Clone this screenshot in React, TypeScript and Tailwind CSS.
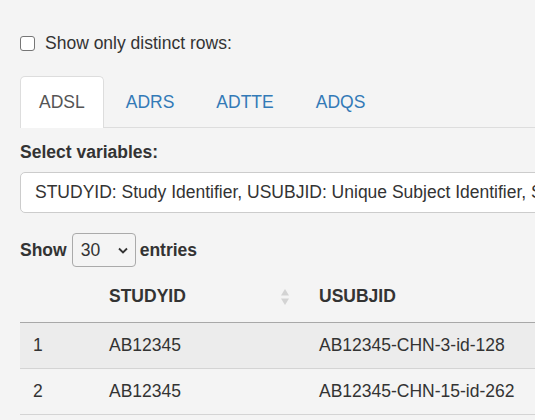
import React from "react";

const rows = [
  { n: 1, studyid: "AB12345", usubjid: "AB12345-CHN-3-id-128" },
  { n: 2, studyid: "AB12345", usubjid: "AB12345-CHN-15-id-262" },
];

const tabs = ["ADSL", "ADRS", "ADTTE", "ADQS"];

function SortIcon() {
  return (
    <svg width="10" height="18" viewBox="0 0 10 18" className="shrink-0">
      <path d="M5 1 L9 7.5 L1 7.5 Z" fill="#d3d3d3" />
      <path d="M5 17 L9 10.5 L1 10.5 Z" fill="#d3d3d3" />
    </svg>
  );
}

export default function App() {
  return (
    <div
      className="min-h-screen w-full overflow-hidden bg-[#f4f4f4] pl-[20px] text-[17.5px] leading-[25px] text-[#333]"
      style={{ fontFamily: '"Liberation Sans", Arial, sans-serif' }}
    >
      {/* distinct rows checkbox */}
      <label className="mt-[31px] flex h-[24px] items-center">
        <span className="inline-block h-[15px] w-[15px] rounded-[3px] border border-[#767676] bg-white" />
        <span className="ml-[10px]">Show only distinct rows:</span>
      </label>

      {/* tabs */}
      <div className="mt-[21px] flex w-[700px] border-b border-[#ddd]">
        {tabs.map((t, i) => (
          <div
            key={t}
            className={
              i === 0
                ? "-mb-px mr-[2px] flex h-[52px] items-center rounded-t-[5px] border border-b-0 border-[#ddd] bg-white px-[18px] text-[#555]"
                : "-mb-px mr-[2px] flex h-[52px] items-center border border-transparent px-[19px] text-[#337ab7]"
            }
          >
            {t}
          </div>
        ))}
      </div>

      {/* select variables */}
      <div className="mt-[12px] font-bold">Select variables:</div>
      <div className="mt-[7px] flex h-[41px] w-[700px] items-center whitespace-nowrap rounded-[5px] border border-[#ccc] bg-white px-[14px]">
        STUDYID: Study Identifier, USUBJID: Unique Subject Identifier, SUBJID: Subject Identifier
      </div>

      {/* entries */}
      <div className="mt-[20px] flex h-[34px] items-center font-bold">
        <span>Show</span>
        <div className="ml-[5px] mr-[4px] flex h-[34px] w-[64px] items-center justify-between rounded-[4px] border border-[#aaa] pl-[8px] pr-[6px] font-normal">
          <span>30</span>
          <svg width="12" height="12" viewBox="0 0 12 12">
            <path d="M2 4.5 L6 8.5 L10 4.5" fill="none" stroke="#333" strokeWidth="1.8" />
          </svg>
        </div>
        <span>entries</span>
      </div>

      {/* table */}
      <div className="mt-[4px] w-[700px]">
        <div className="flex h-[52px] items-center border-b border-[#a8a8a8] font-bold">
          <div className="w-[76px]" />
          <div className="flex w-[210px] items-center justify-between pl-[13px] pr-[16px]">
            <span>STUDYID</span>
            <SortIcon />
          </div>
          <div className="pl-[13px]">USUBJID</div>
        </div>
        {rows.map((r, i) => (
          <div
            key={r.n}
            className={
              i % 2 === 0
                ? "flex h-[46px] items-center border-b border-[#d4d4d4] bg-[#ececec]"
                : "flex h-[46px] items-center border-b border-[#d4d4d4]"
            }
          >
            <div className="w-[76px] pl-[13px]">{r.n}</div>
            <div className="w-[210px] pl-[13px]">{r.studyid}</div>
            <div className="pl-[13px]">{r.usubjid}</div>
          </div>
        ))}
      </div>
    </div>
  );
}
